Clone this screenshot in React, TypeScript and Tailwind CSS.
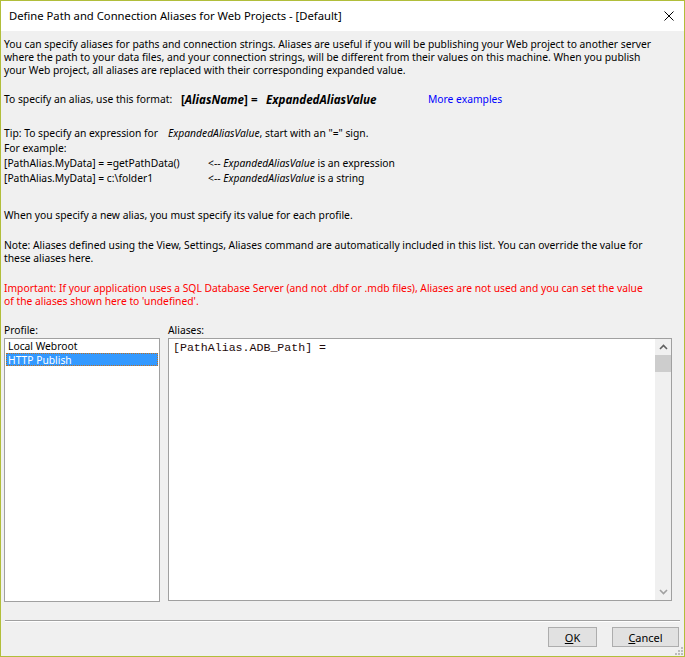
import React from "react";

const ui = { fontFamily: '"Noto Sans", "Open Sans", sans-serif' };
const mono = { fontFamily: '"Liberation Mono", "Courier New", monospace' };

function Line({ children, className = "" }: { children: React.ReactNode; className?: string }) {
  return <div className={`whitespace-nowrap h-[13px] leading-[13px] ${className}`}>{children}</div>;
}

function ResizeGrip() {
  const dots = [
    [6, 0],
    [3, 3],
    [6, 3],
    [0, 6],
    [3, 6],
    [6, 6],
  ];
  return (
    <svg width="8" height="8" className="absolute right-[1px] bottom-[1px]">
      {dots.map(([x, y], i) => (
        <rect key={i} x={x} y={y} width="2" height="2" fill="#bcbcbc" />
      ))}
    </svg>
  );
}

export default function App() {
  return (
    <div
      className="relative w-[685px] h-[657px] border border-[#b1be3a] bg-[#f0f0f0] flex flex-col text-black text-[10.3px] overflow-hidden"
      style={ui}
    >
      {/* title bar */}
      <div className="h-[30px] bg-white flex items-center justify-between pl-[8px] pr-[10px] shrink-0">
        <span className="text-[11.25px] leading-none">Define Path and Connection Aliases for Web Projects - [Default]</span>
        <svg width="10" height="10" viewBox="0 0 10 10">
          <path d="M0.5 0.5 L9.5 9.5 M9.5 0.5 L0.5 9.5" stroke="#000" strokeWidth="1" />
        </svg>
      </div>

      <div className="flex-1 flex flex-col pl-[3px] pr-[3px] pt-[7px]">
        <Line>You can specify aliases for paths and connection strings. Aliases are useful if you will be publishing your Web project to another server</Line>
        <Line>where the path to your data files, and your connection strings, will be different from their values on this machine. When you publish</Line>
        <Line>your Web project, all aliases are replaced with their corresponding expanded value.</Line>

        <div className="mt-[16px] h-[13px] leading-[13px] whitespace-nowrap flex items-center">
          <span className="w-[177px]">To specify an alias, use this format:</span>
          <span className="w-[85px] font-bold text-[11.6px]">
            [<i>AliasName</i>] =
          </span>
          <span className="w-[162px] font-bold italic text-[11.6px]">ExpandedAliasValue</span>
          <span className="text-[#0000ff]">More examples</span>
        </div>

        <div className="mt-[20px] flex flex-col leading-[15px]">
          <div className="h-[15px] whitespace-nowrap flex">
            <span className="w-[164px]">Tip: To specify an expression for</span>
            <span>
              <i>ExpandedAliasValue</i>, start with an "=" sign.
            </span>
          </div>
          <div className="h-[15px] whitespace-nowrap">For example:</div>
          <div className="h-[15px] whitespace-nowrap flex">
            <span className="w-[204px]">[PathAlias.MyData] = =getPathData()</span>
            <span>
              &lt;-- <i>ExpandedAliasValue</i> is an expression
            </span>
          </div>
          <div className="h-[15px] whitespace-nowrap flex">
            <span className="w-[204px]">[PathAlias.MyData] = c:\folder1</span>
            <span>
              &lt;-- <i>ExpandedAliasValue</i> is a string
            </span>
          </div>
        </div>

        <Line className="mt-[23px]">When you specify a new alias, you must specify its value for each profile.</Line>

        <Line className="mt-[17px]">Note: Aliases defined using the View, Settings, Aliases command are automatically included in this list. You can override the value for</Line>
        <Line>these aliases here.</Line>

        <Line className="mt-[17px] text-[#ff0000]">Important: If your application uses a SQL Database Server (and not .dbf or .mdb files), Aliases are not used and you can set the value</Line>
        <Line className="text-[#ff0000]">of the aliases shown here to 'undefined'.</Line>

        <div className="mt-[16px] flex gap-[8px]">
          <div className="w-[156px] flex flex-col">
            <div className="h-[13px] leading-[13px]">Profile:</div>
            <div className="mt-[1px] h-[264px] border border-[#a0a0a0] bg-white p-[1px] flex flex-col">
              <div className="h-[13px] leading-[13px] pl-[2px]">Local Webroot</div>
              <div className="h-[13px] leading-[12px] pl-[1px] bg-[#3399ff] text-white border border-dotted border-[#c07020]">
                HTTP Publish
              </div>
            </div>
          </div>
          <div className="w-[504px] flex flex-col">
            <div className="h-[13px] leading-[13px]">Aliases:</div>
            <div className="mt-[1px] h-[263px] border border-[#a0a0a0] bg-white flex">
              <div className="flex-1 pl-[4px] pt-[2px]">
                <div className="text-[11.6px] leading-[13px] text-[#1e0a0a] whitespace-pre" style={mono}>
                  [PathAlias.ADB_Path] =
                </div>
              </div>
              <div className="w-[16px] bg-[#f0f0f0] flex flex-col">
                <div className="h-[16px] flex items-center justify-center">
                  <svg width="9" height="6" viewBox="0 0 9 6">
                    <path d="M1 5 L4.5 1.5 L8 5" fill="none" stroke="#606060" strokeWidth="1.6" />
                  </svg>
                </div>
                <div className="h-[17px] bg-[#cdcdcd]" />
                <div className="flex-1" />
                <div className="h-[16px] flex items-center justify-center">
                  <svg width="9" height="6" viewBox="0 0 9 6">
                    <path d="M1 1 L4.5 4.5 L8 1" fill="none" stroke="#a0a0a0" strokeWidth="1.6" />
                  </svg>
                </div>
              </div>
            </div>
          </div>
        </div>

        {/* separator */}
        <div className="mt-[18px] ml-[1px] mr-[1px] h-[2px] border-t border-[#a0a0a0] border-b border-b-white" />

        <div className="mt-[5px] flex justify-end gap-[15px] pr-[2px]">
          <button className="w-[49px] h-[20px] bg-[#e1e1e1] border border-[#adadad] text-[11px] leading-none">
            <u>O</u>K
          </button>
          <button className="w-[67px] h-[20px] bg-[#e1e1e1] border border-[#adadad] text-[11px] leading-none">
            <u>C</u>ancel
          </button>
        </div>
      </div>
      <ResizeGrip />
    </div>
  );
}
